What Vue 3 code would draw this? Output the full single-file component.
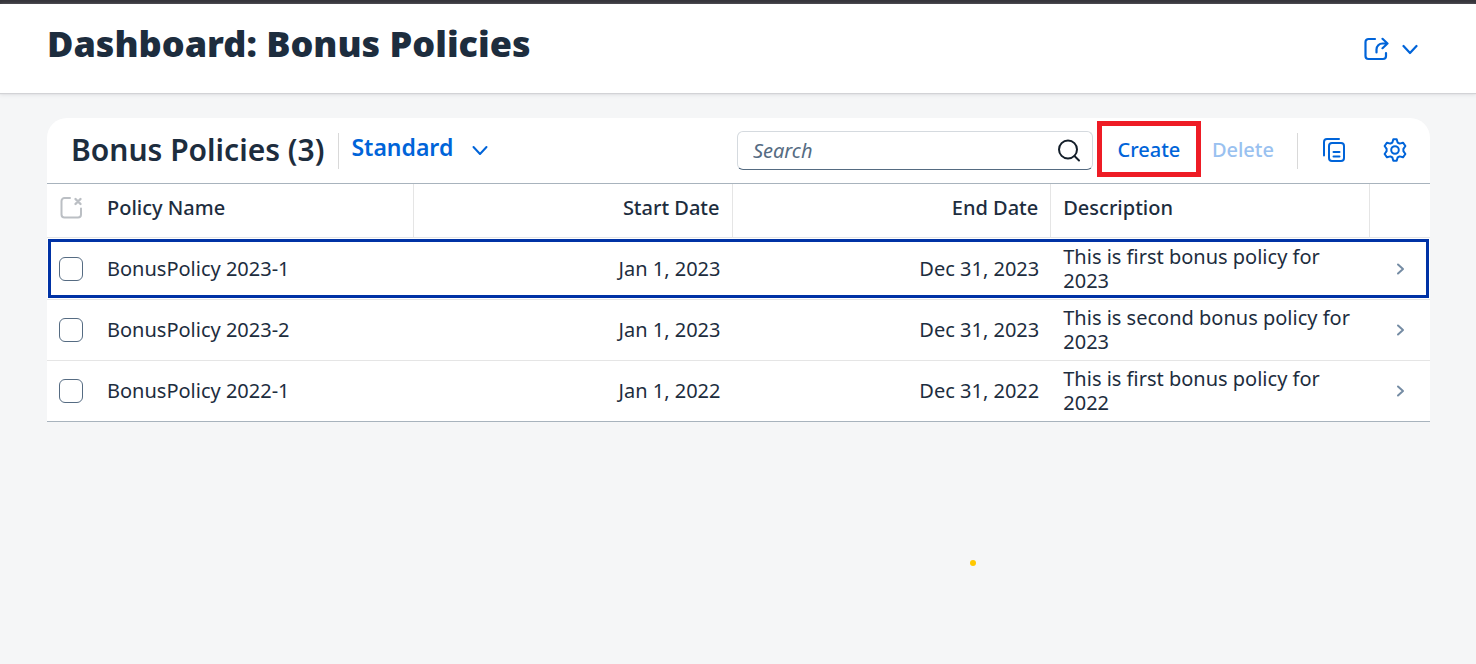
<script setup>
import { ref } from 'vue'

const query = ref('')
const policies = ref([
  { name: 'BonusPolicy 2023-1', start: 'Jan 1, 2023', end: 'Dec 31, 2023', description: 'This is first bonus policy for 2023', checked: false },
  { name: 'BonusPolicy 2023-2', start: 'Jan 1, 2023', end: 'Dec 31, 2023', description: 'This is second bonus policy for 2023', checked: false },
  { name: 'BonusPolicy 2022-1', start: 'Jan 1, 2022', end: 'Dec 31, 2022', description: 'This is first bonus policy for 2022', checked: false },
])
const focused = ref(0)

function clearSelection() {
  policies.value.forEach((p) => { p.checked = false })
}
</script>

<template>
  <div class="page">
    <header class="page-header">
      <h1>Dashboard: Bonus Policies</h1>
      <button class="share" type="button" aria-label="Share">
        <svg width="25" height="26" viewBox="0 0 25 26" fill="none" stroke="currentColor" stroke-width="2.2" stroke-linecap="round" stroke-linejoin="round">
          <path d="M11 3H4.500a3 3 0 0 0-3 3v14a3 3 0 0 0 3 3H19a3 3 0 0 0 3-3v-3" />
          <path d="M12.500 16.500v-3a6 6 0 0 1 6-6h5M18.500 2.800l5 4.700-5 4.700" />
        </svg>
        <svg width="16" height="16" viewBox="0 0 16 16" fill="none" stroke="currentColor" stroke-width="2.2" stroke-linecap="round" stroke-linejoin="round">
          <path d="M1.500 5L8 12l6.500-7" />
        </svg>
      </button>
    </header>

    <main>
      <section class="card">
        <div class="toolbar">
          <h2>Bonus Policies ({{ policies.length }})</h2>
          <span class="divider"></span>
          <button class="variant" type="button">
            <span>Standard</span>
            <svg width="16" height="16" viewBox="0 0 16 16" fill="none" stroke="currentColor" stroke-width="2" stroke-linecap="round" stroke-linejoin="round">
              <path d="M1.500 5L8 12l6.500-7" />
            </svg>
          </button>
          <form class="search" @submit.prevent>
            <input v-model="query" type="text" placeholder="Search" aria-label="Search" />
            <button type="submit" aria-label="Run search">
              <svg width="24" height="24" viewBox="0 0 24 24" fill="none" stroke="currentColor" stroke-width="2" stroke-linecap="round">
                <circle cx="11" cy="10.500" r="9" />
                <path d="M17.500 17L22 21.500" />
              </svg>
            </button>
          </form>
          <button class="action create" type="button">Create</button>
          <button class="action delete" type="button" disabled>Delete</button>
          <span class="divider end"></span>
          <button class="icon" type="button" aria-label="Copy">
            <svg width="24" height="24" viewBox="0 0 24 24" fill="none" stroke="currentColor" stroke-width="2" stroke-linecap="round" stroke-linejoin="round">
              <path d="M2 17.500V4a3 3 0 0 1 3-3h12" />
              <rect x="7" y="5" width="15" height="18" rx="3" />
              <path d="M11.500 14h6M11.500 18.500h6" />
            </svg>
          </button>
          <button class="icon" type="button" aria-label="Settings">
            <svg width="24" height="24" viewBox="0 0 24 24" fill="none" stroke="currentColor" stroke-width="2" stroke-linejoin="round">
              <path d="M10.300 1.300h3.400l.9 3.200 2 1.100 3.400-.9 2.400 3.300-2 2.800v2.400l2 2.800-2.400 3.300-3.400-.9-2 1.100-.9 3.200h-3.400l-.9-3.200-2-1.100-3.400.9-2.400-3.300 2-2.800v-2.400l-2-2.800L4 4.700l3.400.9 2-1.100z" />
              <circle cx="12" cy="12" r="3.800" />
            </svg>
          </button>
        </div>

        <table>
          <colgroup>
            <col class="col-select" />
            <col />
            <col />
            <col />
            <col />
            <col class="col-nav" />
          </colgroup>
          <thead>
            <tr>
              <th class="select">
                <button class="clear" type="button" aria-label="Clear selection" @click="clearSelection">
                  <svg width="24" height="24" viewBox="0 0 24 24" fill="none" stroke="currentColor" stroke-width="2" stroke-linecap="round" stroke-linejoin="round">
                    <path d="M11 2H5.500a3 3 0 0 0-3 3v13.500a3 3 0 0 0 3 3H19a3 3 0 0 0 3-3v-6" />
                    <path d="M16.500 3l5 5M21.500 3l-5 5" stroke-width="2.400" />
                  </svg>
                </button>
              </th>
              <th scope="col" class="ruled">Policy Name</th>
              <th scope="col" class="ruled date">Start Date</th>
              <th scope="col" class="ruled date">End Date</th>
              <th scope="col" class="ruled">Description</th>
              <th></th>
            </tr>
          </thead>
          <tbody>
            <tr v-for="(p, i) in policies" :key="p.name" :class="{ focused: i === focused }" @click="focused = i">
              <td class="select"><input v-model="p.checked" type="checkbox" :aria-label="p.name" /></td>
              <td>{{ p.name }}</td>
              <td class="date">{{ p.start }}</td>
              <td class="date">{{ p.end }}</td>
              <td>{{ p.description }}</td>
              <td class="nav">
                <svg width="12" height="14" viewBox="0 0 12 14" fill="none" stroke="currentColor" stroke-width="2" stroke-linecap="round" stroke-linejoin="round">
                  <path d="M3 2.500L8 7l-5 4.500" />
                </svg>
              </td>
            </tr>
          </tbody>
        </table>
      </section>
    </main>
    <span class="pointer"></span>
  </div>
</template>

<style>
body {
  background: #f5f6f7;
}
</style>

<style scoped>
.page {
  position: relative;
  box-sizing: border-box;
  min-height: 100vh;
  border-top: 4px solid #36353b;
  background: #f5f6f7;
  color: #1d2d3e;
  font-family: "Noto Sans", "Open Sans", sans-serif;
  font-size: 20px;
  line-height: 24px;
}

.page *,
.page *::before {
  box-sizing: border-box;
}

button {
  padding: 0;
  border: 0;
  background: none;
  color: #0064d9;
  font: inherit;
  cursor: pointer;
}

svg {
  display: block;
  flex: none;
}

.page-header {
  display: flex;
  align-items: flex-start;
  justify-content: space-between;
  height: 89px;
  padding: 16px 58px 0 47px;
  background: #fff;
  box-shadow: 0 1px 1px #d2d3d6, 0 2px 4px #e0e1e4;
}

h1 {
  margin: 0;
  font-size: 36px;
  font-weight: 900;
  line-height: 48px;
}

.share {
  display: flex;
  align-items: center;
  gap: 13px;
  height: 58px;
}

main {
  padding: 25px 46px 0 47px;
}

.card {
  border-radius: 20px 20px 0 0;
  background: #fff;
}

.toolbar {
  display: flex;
  align-items: center;
  height: 66px;
  padding: 0 23px 0 24px;
  border-bottom: 1px solid #a8b3bd;
}

h2 {
  margin: 0;
  padding: 0 2px 2px 0;
  font-size: 30px;
  font-weight: 600;
  line-height: 40px;
  white-space: nowrap;
}

.divider {
  width: 1px;
  height: 36px;
  margin: 0 12px;
  background: #d9d9d9;
}

.variant {
  display: flex;
  align-items: center;
  gap: 19px;
  padding-bottom: 8px;
  font-size: 23px;
  font-weight: 600;
}

.variant svg {
  margin-top: 6px;
}

.search {
  display: flex;
  align-items: center;
  width: 356px;
  height: 39px;
  margin-left: auto;
  padding: 0 11px 0 15px;
  border: 1px solid #d5dadf;
  border-bottom-color: #556b81;
  border-radius: 6px;
}

.search input {
  flex: 1;
  min-width: 0;
  padding: 0;
  border: 0;
  outline: 0;
  background: none;
  color: #1d2d3e;
  font: inherit;
}

.search input::placeholder {
  color: #556b82;
  font-style: italic;
  opacity: 1;
}

.search button {
  color: #131e29;
}

.action {
  font-weight: 500;
}

.create {
  width: 104px;
  height: 56px;
  margin-bottom: 4px;
  margin-left: 4px;
  padding-top: 2px;
  border: 5px solid #ee1c25;
}

.delete {
  margin-bottom: 2px;
  margin-left: 11px;
  color: #99c1f0;
}

.divider.end {
  margin: 0 24px 0 23px;
}

.icon {
  margin-bottom: 1px;
}

.icon + .icon {
  margin-left: 37px;
}

table {
  width: 100%;
  border-collapse: separate;
  border-spacing: 0;
  table-layout: fixed;
  border-bottom: 1px solid #a8b3bd;
}

.col-select {
  width: 48px;
}

.col-nav {
  width: 60px;
}

th,
td {
  padding: 0 12px;
  text-align: left;
  vertical-align: middle;
}

th {
  height: 54px;
  padding-bottom: 6px;
  border-bottom: 1px solid #e5e5e5;
  font-weight: 500;
}

td {
  height: 61px;
  border-bottom: 1px solid #e5e5e5;
}

tbody tr:first-child td {
  height: 62px;
}

tbody tr:last-child td {
  height: 60px;
  border-bottom: 0;
}

th.ruled {
  border-right: 1px solid #e5e5e5;
}

.date {
  text-align: right;
}

.select {
  padding-right: 0;
}

.clear {
  display: block;
  color: #bbbfc4;
}

td input {
  display: block;
  width: 24px;
  height: 24px;
  margin: 0;
  border: 1px solid #556b82;
  border-radius: 6px;
  background: #fff;
  appearance: none;
}

td input:checked {
  background: #0064d9;
}

.nav {
  padding-left: 25px;
  color: #758ca4;
}

.focused {
  position: relative;
}

.focused td:first-child::before {
  position: absolute;
  inset: 1px 1px 2px;
  border: 3px solid #0032a5;
  content: "";
  pointer-events: none;
}

.pointer {
  position: absolute;
  top: 556px;
  left: 970px;
  width: 6px;
  height: 6px;
  border-radius: 50%;
  background: #ffc800;
}
</style>
